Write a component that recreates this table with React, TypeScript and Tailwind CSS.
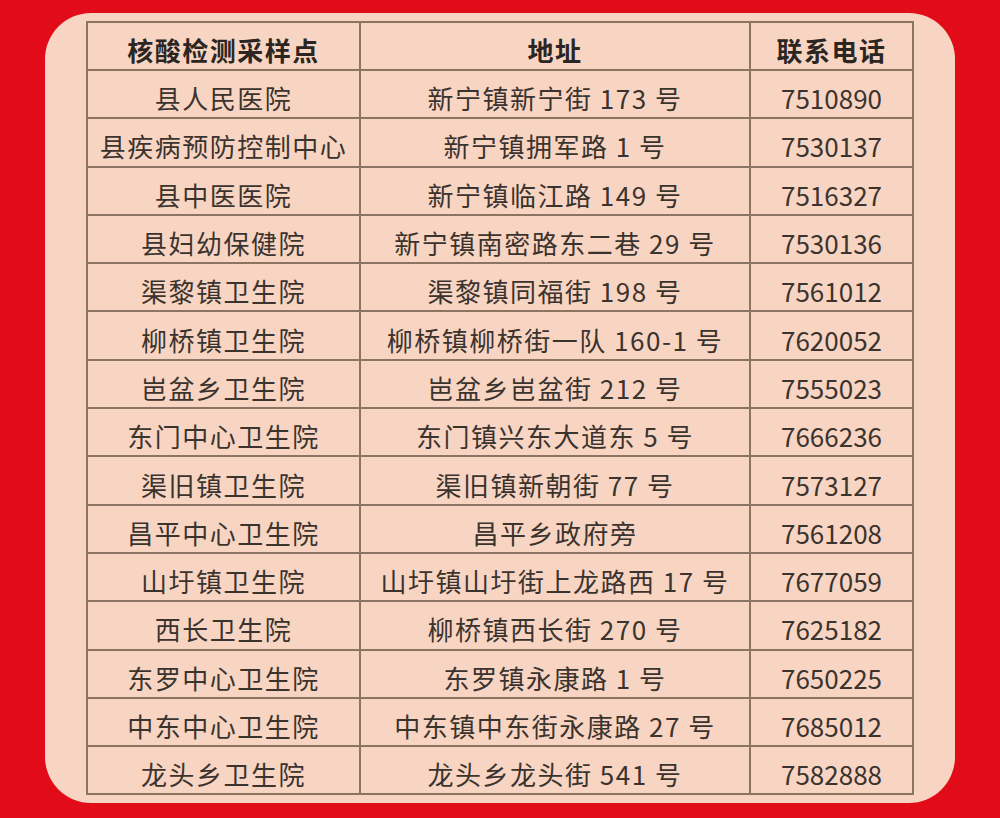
const rows: [string, string, string][] = [
  ["县人民医院", "新宁镇新宁街 173 号", "7510890"],
  ["县疾病预防控制中心", "新宁镇拥军路 1 号", "7530137"],
  ["县中医医院", "新宁镇临江路 149 号", "7516327"],
  ["县妇幼保健院", "新宁镇南密路东二巷 29 号", "7530136"],
  ["渠黎镇卫生院", "渠黎镇同福街 198 号", "7561012"],
  ["柳桥镇卫生院", "柳桥镇柳桥街一队 160-1 号", "7620052"],
  ["岜盆乡卫生院", "岜盆乡岜盆街 212 号", "7555023"],
  ["东门中心卫生院", "东门镇兴东大道东 5 号", "7666236"],
  ["渠旧镇卫生院", "渠旧镇新朝街 77 号", "7573127"],
  ["昌平中心卫生院", "昌平乡政府旁", "7561208"],
  ["山圩镇卫生院", "山圩镇山圩街上龙路西 17 号", "7677059"],
  ["西长卫生院", "柳桥镇西长街 270 号", "7625182"],
  ["东罗中心卫生院", "东罗镇永康路 1 号", "7650225"],
  ["中东中心卫生院", "中东镇中东街永康路 27 号", "7685012"],
  ["龙头乡卫生院", "龙头乡龙头街 541 号", "7582888"],
];

const cell = "border-2 border-[#8c7464] text-center align-middle pt-[8px] whitespace-nowrap";

export default function App() {
  return (
    <div
      className="w-full h-[818px] bg-[#e20c18] pt-[13px] px-[45px] overflow-hidden"
      style={{ fontFamily: '"Noto Sans CJK SC", "Noto Sans", sans-serif' }}
    >
      <div className="h-[790px] bg-[#f8d5c3] rounded-[46px] pl-[41px] pr-[42px] pt-[8px]">
        <table className="w-[826px] table-fixed border-collapse text-[26px] tracking-[1.5px] text-[#3b332e] leading-none">
          <colgroup>
            <col className="w-[273px]" />
            <col className="w-[390px]" />
            <col className="w-[163px]" />
          </colgroup>
          <thead>
            <tr className="h-[48px] font-bold text-[#2b2622]">
              <th className={cell}>核酸检测采样点</th>
              <th className={cell}>地址</th>
              <th className={cell}>联系电话</th>
            </tr>
          </thead>
          <tbody>
            {rows.map(([name, addr, tel]) => (
              <tr key={name} className="h-[48.3px]">
                <td className={cell}>{name}</td>
                <td className={cell}>{addr}</td>
                <td className={cell + " tracking-normal"}>{tel}</td>
              </tr>
            ))}
          </tbody>
        </table>
      </div>
    </div>
  );
}
